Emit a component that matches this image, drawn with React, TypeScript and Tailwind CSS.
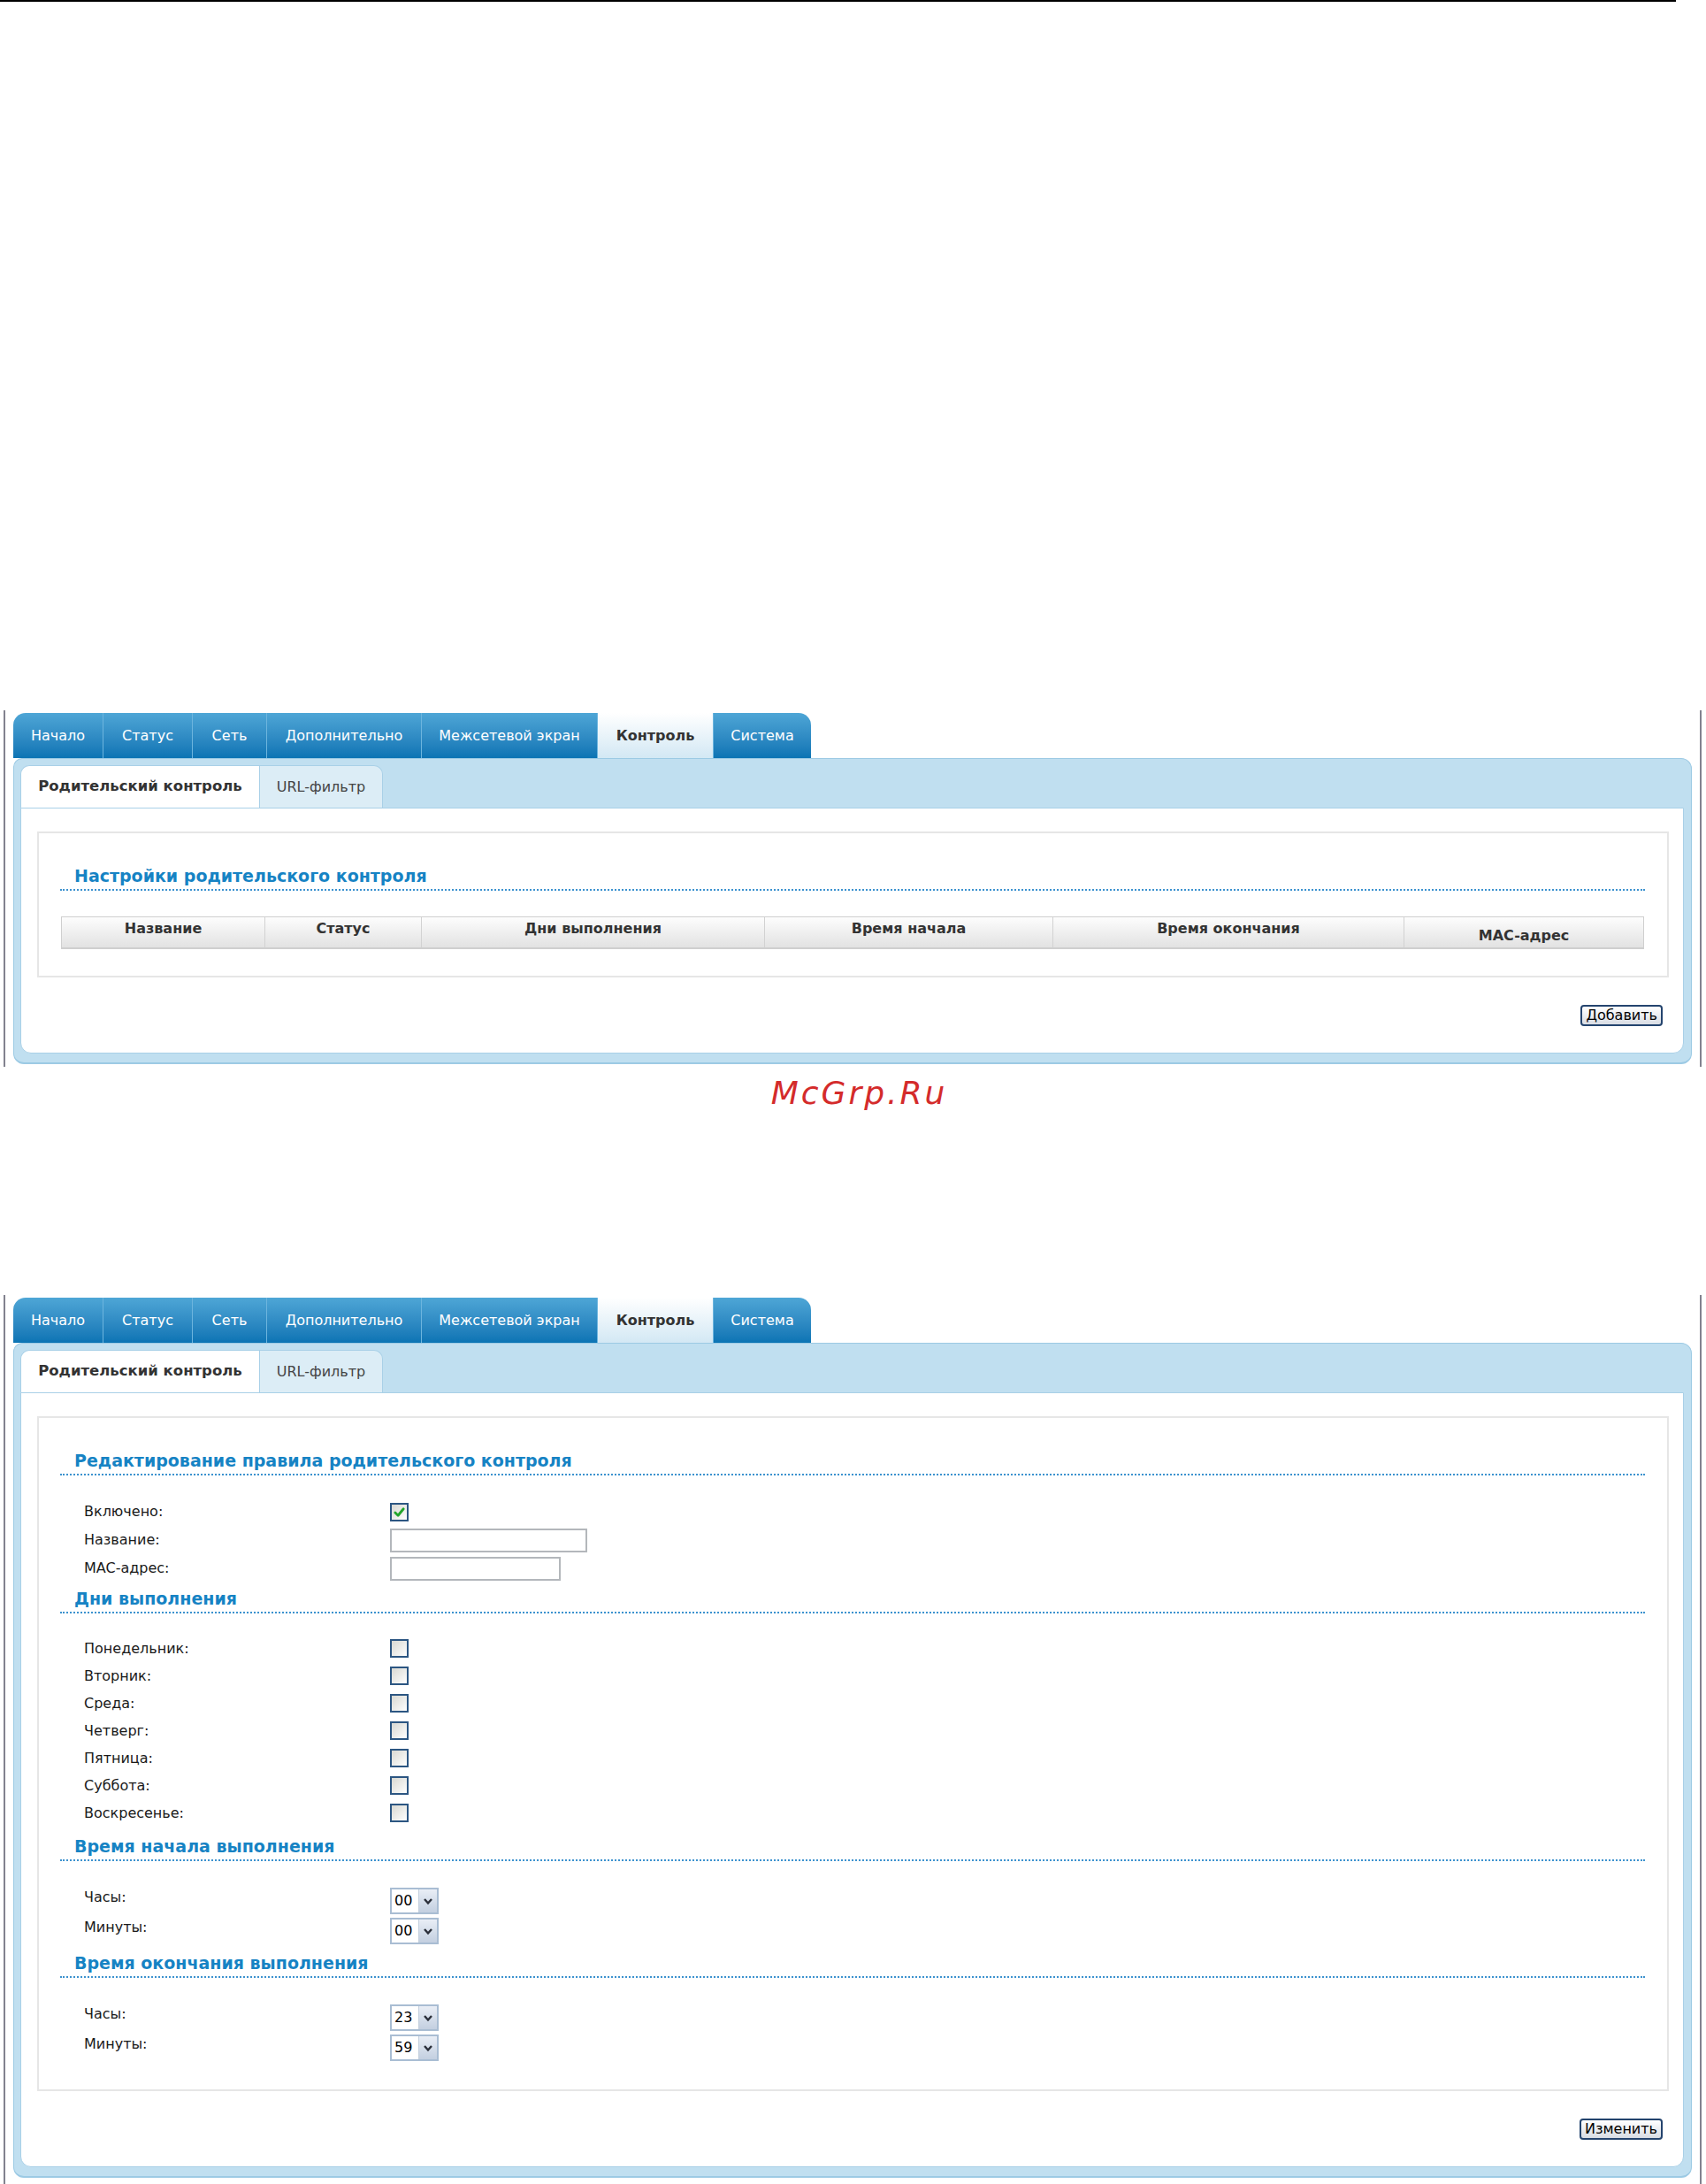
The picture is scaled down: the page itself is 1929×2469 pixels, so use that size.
import React from 'react';

const tabs = [
  { label: 'Начало', w: 'w-[101px]' },
  { label: 'Статус', w: 'w-[101px]' },
  { label: 'Сеть', w: 'w-[84px]' },
  { label: 'Дополнительно', w: 'w-[175px]' },
  { label: 'Межсетевой экран', w: 'w-[199px]' },
  { label: 'Контроль', w: 'w-[131px]', active: true },
  { label: 'Система', w: 'w-[111px]' },
];

const columns = [
  { label: 'Название', w: 'w-[229px]' },
  { label: 'Статус', w: 'w-[177px]' },
  { label: 'Дни выполнения', w: 'w-[388px]' },
  { label: 'Время начала', w: 'w-[326px]' },
  { label: 'Время окончания', w: 'w-[397px]' },
  { label: 'MAC-адрес', w: 'flex-1', low: true },
];

const days = ['Понедельник:', 'Вторник:', 'Среда:', 'Четверг:', 'Пятница:', 'Суббота:', 'Воскресенье:'];

const TopTabs = () => (
  <div className="flex h-[51px]">
    {tabs.map((t, i) => (
      <div
        key={t.label}
        className={`${t.w} flex items-center justify-center text-[16px] leading-[20px] ${
          t.active
            ? 'bg-linear-to-b from-white to-[#d3e8f4] font-bold text-[#333]'
            : 'bg-linear-to-b from-[#4ea6d6] to-[#0a74b4] text-white'
        } ${i === 0 ? 'rounded-tl-[14px]' : 'border-l border-[#6db5de]'} ${i === tabs.length - 1 ? 'rounded-tr-[14px]' : ''}`}
      >
        {t.label}
      </div>
    ))}
  </div>
);

const SubTabs = () => (
  <div className="flex h-[48px]">
    <div className="flex w-[270px] items-center justify-center rounded-tl-[10px] border-l border-t border-[#a9d0e7] bg-white text-[16.5px] font-bold text-[#333]">
      Родительский контроль
    </div>
    <div className="flex w-[140px] items-center justify-center rounded-tr-[10px] border-l border-r border-t border-[#a9d0e7] bg-[#dcedf6] text-[16px] text-[#444]">
      URL-фильтр
    </div>
  </div>
);

const SectionTitle = ({ children }: { children: React.ReactNode }) => (
  <div className="ml-[24px] mr-[25px] border-b-2 border-dotted border-[#3c92cf] pb-[3px] pl-[16px] text-[19px] font-bold leading-[24px] text-[#1683c4]">
    {children}
  </div>
);

const Button = ({ children }: { children: React.ReactNode }) => (
  <div className="flex justify-end pr-[23px]">
    <div className="flex h-[24px] items-center rounded-[4px] border-2 border-[#24446e] bg-linear-to-b from-white to-[#d9dde4] px-[4px] text-[16px] leading-[18px] text-black">
      {children}
    </div>
  </div>
);

const Checkbox = ({ checked }: { checked?: boolean }) => (
  <span className="flex h-[21px] w-[21px] items-center justify-center border-2 border-[#2c5682] bg-linear-to-br from-[#d8d8d2] to-white">
    {checked && (
      <svg width="15" height="15" viewBox="0 0 16 16">
        <path d="M3 8.5 L6.5 12 L13 4" fill="none" stroke="#22a52b" strokeWidth="3" strokeLinecap="round" strokeLinejoin="round" />
      </svg>
    )}
  </span>
);

const TextInput = ({ w }: { w: string }) => (
  <span className={`block h-[27px] ${w} border-2 border-[#b3b7bb] bg-white`} />
);

const TimeSelect = ({ value }: { value: string }) => (
  <span className="flex h-[30px] w-[55px] border-2 border-[#a9bdd3] bg-white">
    <span className="flex-1 pl-[3px] text-[16px] leading-[26px] text-black">{value}</span>
    <span className="flex w-[21px] items-center justify-center border-l border-[#c3cfdd] bg-linear-to-b from-[#e9eef6] to-[#c3cfe0]">
      <svg width="14" height="14" viewBox="0 0 14 14">
        <path d="M3 5 L7 9.5 L11 5" fill="none" stroke="#2b2f3a" strokeWidth="2.4" />
      </svg>
    </span>
  </span>
);

const Row = ({ label, h, children, raise }: { label: string; h: string; children: React.ReactNode; raise?: boolean }) => (
  <div className={`flex ${h} items-center pl-[51px]`}>
    <span className={`w-[346px] text-[16px] leading-[20px] text-[#1a1a1a] ${raise ? 'mb-[9px]' : ''}`}>{label}</span>
    {children}
  </div>
);

const Panel = ({ children, button }: { children: React.ReactNode; button: string }) => (
  <div>
    <TopTabs />
    <div className="rounded-[12px] rounded-tl-[10px] border border-b-2 border-[#9ccae4] bg-[#c0dff0] pb-[10px] pl-[7px] pr-[8px] pt-[7px]">
      <SubTabs />
      <div className="rounded-b-[12px] border border-[#a9d0e7] bg-white pb-[30px] pt-[26px]">
        <div className="ml-[18px] mr-[16px] border-2 border-[#e6e6e6] pb-[30px] pt-[36px]">{children}</div>
        <div className="mt-[31px]">
          <Button>{button}</Button>
        </div>
      </div>
    </div>
  </div>
);

const Frame = ({ children, className }: { children: React.ReactNode; className: string }) => (
  <div className={`ml-[4px] w-[1920px] border-x-2 border-[#82828f] pl-[9px] pr-[9px] pt-[3px] ${className}`}>{children}</div>
);

export default function App() {
  return (
    <div className="min-h-[2469px] w-[1929px] bg-white font-['DejaVu_Sans',sans-serif]">
      <div className="h-[2px] w-[1895px] bg-black" />

      <Frame className="mt-[801px] pb-[3px]">
        <Panel button="Добавить">
          <SectionTitle>Настройки родительского контроля</SectionTitle>
          <div className="ml-[25px] mr-[26px] mt-[29px] flex h-[37px] border border-b-2 border-[#cfcfcf] bg-linear-to-b from-[#fdfdfd] to-[#e2e2e2]">
            {columns.map((c, i) => (
              <div
                key={c.label}
                className={`${c.w} text-center text-[16px] font-bold leading-[20px] text-[#333] ${c.low ? 'pt-[11px]' : 'pt-[3px]'} ${
                  i > 0 ? 'border-l border-[#d2d2d2]' : ''
                }`}
              >
                {c.label}
              </div>
            ))}
          </div>
        </Panel>
      </Frame>

      <div className="mt-[8px] pl-[14px] text-center text-[36px] italic leading-[44px] tracking-[3px] text-[#d42b2b]">McGrp.Ru</div>

      <Frame className="mt-[206px] pb-[9px]">
        <Panel button="Изменить">
          <SectionTitle>Редактирование правила родительского контроля</SectionTitle>
          <div className="pt-[25px]">
            <Row label="Включено:" h="h-[32px]">
              <Checkbox checked />
            </Row>
            <Row label="Название:" h="h-[32px]">
              <TextInput w="w-[223px]" />
            </Row>
            <Row label="MAC-адрес:" h="h-[32px]">
              <TextInput w="w-[193px]" />
            </Row>
          </div>

          <div className="mt-[6px]">
            <SectionTitle>Дни выполнения</SectionTitle>
          </div>
          <div className="pt-[24px]">
            {days.map((d) => (
              <Row key={d} label={d} h="h-[31px]">
                <Checkbox />
              </Row>
            ))}
          </div>

          <div className="mt-[10px]">
            <SectionTitle>Время начала выполнения</SectionTitle>
          </div>
          <div className="pt-[28px]">
            <Row label="Часы:" h="h-[34px]" raise>
              <TimeSelect value="00" />
            </Row>
            <Row label="Минуты:" h="h-[34px]" raise>
              <TimeSelect value="00" />
            </Row>
          </div>

          <div className="mt-[7px]">
            <SectionTitle>Время окончания выполнения</SectionTitle>
          </div>
          <div className="pt-[28px]">
            <Row label="Часы:" h="h-[34px]" raise>
              <TimeSelect value="23" />
            </Row>
            <Row label="Минуты:" h="h-[34px]" raise>
              <TimeSelect value="59" />
            </Row>
          </div>
        </Panel>
      </Frame>
    </div>
  );
}
